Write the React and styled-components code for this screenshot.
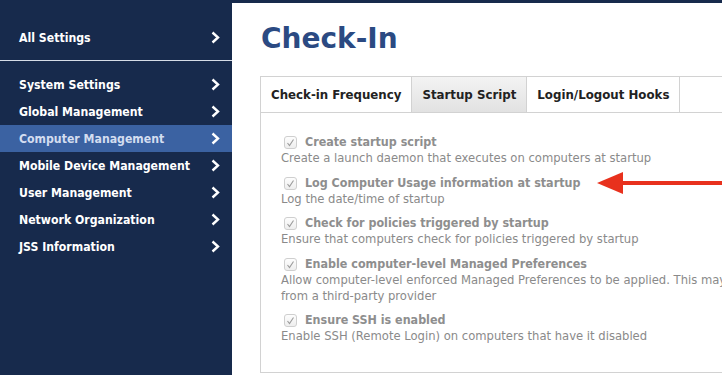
import React from "react";
import styled, { createGlobalStyle } from "styled-components";

const Global = createGlobalStyle`
  html, body { margin: 0; padding: 0; overflow: hidden; }
  body { width: 722px; height: 375px; font-family: "DejaVu Sans", "Liberation Sans", sans-serif; background: #fff; }
`;

const Page = styled.div`
  display: flex;
  width: 722px;
  height: 375px;
  overflow: hidden;
`;

const Sidebar = styled.nav`
  flex: 0 0 232px;
  background: #172a4c;
  padding-top: 24px;
  box-sizing: border-box;
`;

const NavRow = styled.div`
  display: flex;
  align-items: center;
  justify-content: space-between;
  height: 27px;
  padding: 0 12px 0 19px;
  font-family: "DejaVu Sans Condensed", "DejaVu Sans", sans-serif;
  font-size: 12.2px;
  font-weight: bold;
  color: ${(p) => (p.$active ? "#d3ddf0" : "#ffffff")};
  background: ${(p) => (p.$active ? "#3b62a2" : "transparent")};
`;

const Divider = styled.div`
  height: 1px;
  background: #d6dce6;
  margin: 9px 0 10px;
`;

const Chevron = () => (
  <svg width="9" height="13" viewBox="0 0 9 13">
    <polyline points="1.5,1.5 7,6.5 1.5,11.5" fill="none" stroke="#fff" strokeWidth="2.4" />
  </svg>
);

const Main = styled.main`
  position: relative;
  flex: 1 1 auto;
  min-width: 0;
  border-top: 3px solid #172a4c;
  padding: 0 0 0 28px;
  overflow: hidden;
`;

const Title = styled.h1`
  margin: 18px 0 0 1px;
  font-size: 28px;
  line-height: 36px;
  font-weight: bold;
  color: #2b4a82;
`;

const Tabs = styled.div`
  display: flex;
  margin-top: 19px;
  width: 700px;
  border-top: 1px solid #d2d2d2;
  border-left: 1px solid #d2d2d2;
  border-bottom: 1px solid #d2d2d2;
`;

const Tab = styled.div`
  height: 35px;
  display: flex;
  align-items: center;
  padding: 0 10px;
  border-right: 1px solid #d2d2d2;
  font-size: 11.8px;
  font-weight: bold;
  color: #222;
  background: ${(p) => (p.$active ? "linear-gradient(#f3f3f3, #e2e2e2)" : "#fff")};
`;

const Panel = styled.div`
  width: 700px;
  height: 260px;
  box-sizing: border-box;
  border-left: 1px solid #d2d2d2;
  border-bottom: 1px solid #d2d2d2;
  padding: 20px 0 0 20px;
  display: flex;
  flex-direction: column;
  gap: 7.5px;
`;

const Option = styled.div`
  display: flex;
  flex-direction: column;
`;

const LabelRow = styled.div`
  display: flex;
  align-items: center;
  gap: 8px;
  padding-left: 3px;
  height: 17px;
`;

const Box = styled.span`
  width: 13px;
  height: 13px;
  box-sizing: border-box;
  border: 1px solid #cfcfcf;
  border-radius: 3px;
  background: linear-gradient(#fdfdfd, #eeeeee);
  display: flex;
  align-items: center;
  justify-content: center;
  margin-top: 2px;
`;

const Label = styled.span`
  font-family: "DejaVu Sans Condensed", "DejaVu Sans", sans-serif;
  font-size: 12.4px;
  font-weight: bold;
  color: #8e8e8e;
`;

const Desc = styled.div`
  font-size: 11.6px;
  line-height: 16px;
  color: #8a8a8a;
  white-space: pre-line;
`;

const Arrow = styled.svg`
  position: absolute;
  left: 364px;
  top: 164px;
`;

const Check = () => (
  <svg width="9" height="9" viewBox="0 0 9 9">
    <polyline points="1.5,5 3.5,7.5 7.5,1.5" fill="none" stroke="#9a9a9a" strokeWidth="1.1" />
  </svg>
);

const nav = [
  "System Settings",
  "Global Management",
  "Computer Management",
  "Mobile Device Management",
  "User Management",
  "Network Organization",
  "JSS Information",
];

const options = [
  ["Create startup script", "Create a launch daemon that executes on computers at startup"],
  ["Log Computer Usage information at startup", "Log the date/time of startup"],
  ["Check for policies triggered by startup", "Ensure that computers check for policies triggered by startup"],
  [
    "Enable computer-level Managed Preferences",
    "Allow computer-level enforced Managed Preferences to be applied. This may override settings\nfrom a third-party provider",
  ],
  ["Ensure SSH is enabled", "Enable SSH (Remote Login) on computers that have it disabled"],
];

export default function App() {
  return (
    <Page>
      <Global />
      <Sidebar>
        <NavRow>
          All Settings <Chevron />
        </NavRow>
        <Divider />
        {nav.map((n) => (
          <NavRow key={n} $active={n === "Computer Management"}>
            {n} <Chevron />
          </NavRow>
        ))}
      </Sidebar>
      <Main>
        <Title>Check-In</Title>
        <Tabs>
          <Tab>Check-in Frequency</Tab>
          <Tab $active>Startup Script</Tab>
          <Tab>Login/Logout Hooks</Tab>
        </Tabs>
        <Panel>
          {options.map(([l, d]) => (
            <Option key={l}>
              <LabelRow>
                <Box>
                  <Check />
                </Box>
                <Label>{l}</Label>
              </LabelRow>
              <Desc>{d}</Desc>
            </Option>
          ))}
        </Panel>
        <Arrow width="130" height="32" viewBox="0 0 130 32">
          <polygon points="1,16 27,5 27,27" fill="#e8311d" />
          <rect x="25" y="14" width="110" height="4" fill="#e8311d" />
        </Arrow>
      </Main>
    </Page>
  );
}
